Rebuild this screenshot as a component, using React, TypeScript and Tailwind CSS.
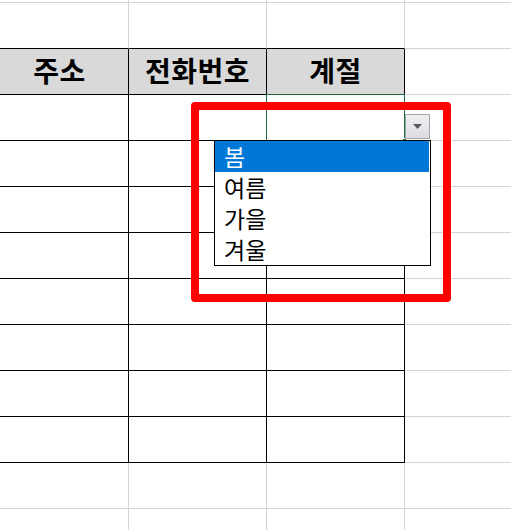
import React from 'react';

const HEADERS = ['주소', '전화번호', '계절', ''];
const OPTIONS = ['봄', '여름', '가을', '겨울'];
const ROW_COUNT = 13; // header is row 2, table body rows 3..10
const COL_COUNT = 4;

const inTable = (r: number) => r >= 2 && r <= 10;

const cellClass = (r: number, c: number) => {
  const right = c <= 2 && inTable(r) ? 'border-r-black' : 'border-r-[#d4d4d4]';
  const bottom = c <= 2 && r >= 1 && r <= 10 ? 'border-b-black' : 'border-b-[#d4d4d4]';
  const bg = r === 2 && c <= 2 ? 'bg-[#d9d9d9]' : 'bg-white';
  const active = r === 3 && c === 2 ? 'z-10' : '';
  return `relative h-[46px] border-r border-b flex items-center justify-center ${right} ${bottom} ${bg} ${active}`;
};

// Active cell with the validation dropdown hanging off it
const ActiveCell: React.FC = () => (
  <>
    <div className="absolute left-[-1px] top-[-1px] right-[-1px] bottom-[-1px] border-[1.5px] border-[#1e6b40]" />
    <div className="absolute right-[-3px] bottom-[-3px] w-[5px] h-[5px] bg-[#1e6b40] border border-white" />
    <div className="absolute left-[138px] top-[19px] w-[25px] h-[25px] border border-[#a6a6a6] bg-gradient-to-b from-[#f0f0f3] to-[#dcdce2] flex items-center justify-center">
      <svg width="9" height="5" viewBox="0 0 9 5">
        <path d="M0 0 H9 L4.5 5 Z" fill="#5a5a5a" />
      </svg>
    </div>
    <div className="absolute left-[-53px] top-[45px] w-[217px] border border-black bg-white pr-px">
      {OPTIONS.map((opt, i) => (
        <div
          key={opt}
          className={`h-[31px] flex items-center pl-[9px] text-[23px] leading-none ${
            i === 0 ? 'bg-[#0078d7] text-white' : 'text-black'
          }`}
        >
          {opt}
        </div>
      ))}
    </div>
  </>
);

const App: React.FC = () => {
  const rows = Array.from({ length: ROW_COUNT }, (_, r) => r);
  const cols = Array.from({ length: COL_COUNT }, (_, c) => c);

  return (
    <div
      className="relative w-[511px] h-[530px] overflow-hidden bg-white"
      style={{ fontFamily: '"Noto Sans CJK KR", "Noto Sans", sans-serif' }}
    >
      {/* sheet grid */}
      <div className="ml-[-9px] mt-[-43px] grid grid-cols-[138px_138px_138px_138px]">
        {rows.map(r =>
          cols.map(c => (
            <div key={`${r}-${c}`} className={cellClass(r, c)}>
              {r === 2 && (
                <span className="text-[28px] font-bold text-black leading-none pb-[4px] tracking-[0.5px]">
                  {HEADERS[c]}
                </span>
              )}
              {r === 3 && c === 2 && <ActiveCell />}
            </div>
          ))
        )}
      </div>

      {/* red highlight box */}
      <div className="absolute left-[191px] top-[102px] w-[260px] h-[200px] border-[8px] border-[#ff0000] rounded-[4px] z-20" />
    </div>
  );
};

export default App;
